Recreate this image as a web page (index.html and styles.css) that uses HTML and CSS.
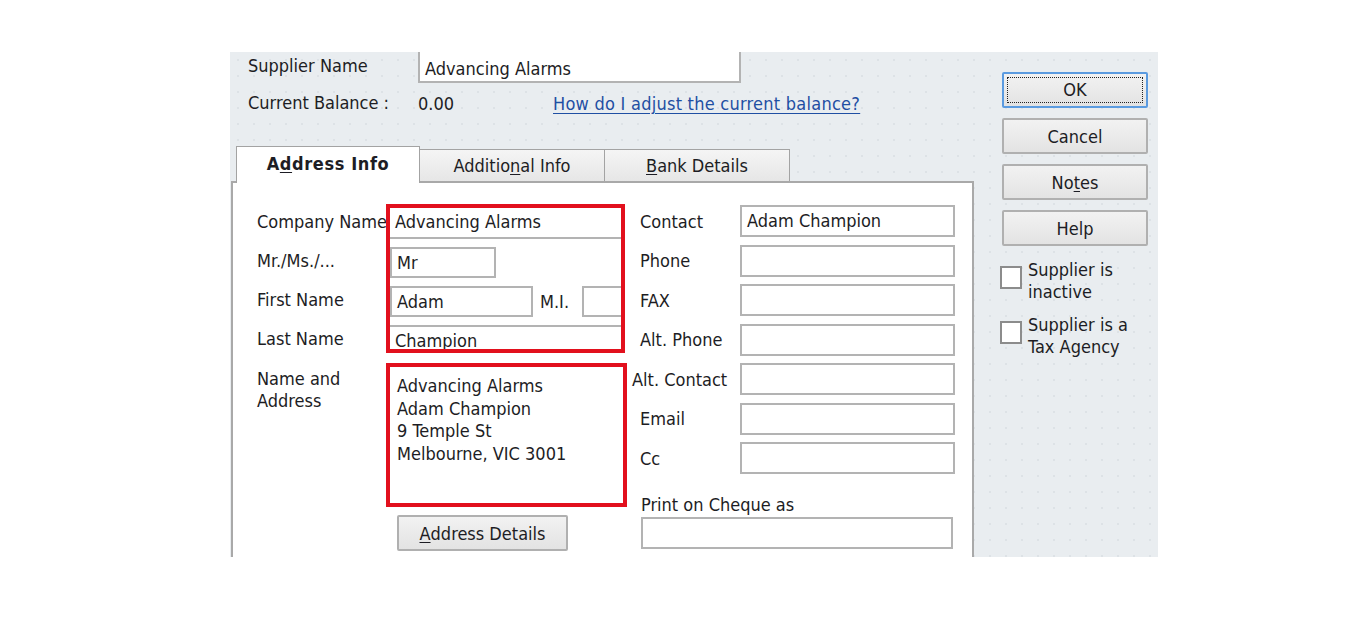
FILE: index.html
```html
<!DOCTYPE html>
<html>
<head>
<meta charset="utf-8">
<link rel="stylesheet" href="styles.css">
</head>
<body>
<div class="page">
  <div class="dialog">
    <div class="main">
      <div class="hdr-row1">
        <span class="hdr-label">Supplier Name</span>
        <div class="field supplier">Advancing Alarms</div>
      </div>
      <div class="hdr-row2">
        <span class="hdr-label">Current Balance :</span>
        <span class="balance">0.00</span>
        <a class="link" href="#">How do I adjust the current balance?</a>
      </div>
      <div class="tabs">
        <div class="tab active">A<u>d</u>dress Info</div>
        <div class="tab">Additio<u>n</u>al Info</div>
        <div class="tab"><u>B</u>ank Details</div>
      </div>
      <div class="panel">
        <div class="left">
          <div class="namegrid">
            <div class="labels">
              <div class="lrow r1">Company Name</div>
              <div class="lrow r2">Mr./Ms./...</div>
              <div class="lrow r3">First Name</div>
              <div class="lrow r4">Last Name</div>
            </div>
            <div class="redbox names">
              <div class="frow r1"><div class="field full">Advancing Alarms</div></div>
              <div class="frow r2"><div class="field mr">Mr</div></div>
              <div class="frow r3">
                <div class="field first">Adam</div>
                <span class="mi-label">M.I.</span>
                <div class="field mi"></div>
              </div>
              <div class="frow r4"><div class="field full">Champion</div></div>
            </div>
          </div>
          <div class="addrrow">
            <div class="addr-label">Name and<br>Address</div>
            <div class="redbox addr">Advancing Alarms<br>Adam Champion<br>9 Temple St<br>Melbourne, VIC 3001</div>
          </div>
          <button class="btn addr-btn"><u>A</u>ddress Details</button>
        </div>
        <div class="right">
          <div class="contact-grid">
            <span class="clabel">Contact</span><div class="field">Adam Champion</div>
            <span class="clabel">Phone</span><div class="field"></div>
            <span class="clabel">FAX</span><div class="field"></div>
            <span class="clabel">Alt. Phone</span><div class="field"></div>
            <span class="clabel shift">Alt. Contact</span><div class="field"></div>
            <span class="clabel">Email</span><div class="field"></div>
            <span class="clabel">Cc</span><div class="field"></div>
          </div>
          <div class="cheque-label">Print on Cheque as</div>
          <div class="field cheque"></div>
        </div>
      </div>
    </div>
    <div class="side">
      <button class="btn side-btn ok"><span class="focus">OK</span></button>
      <button class="btn side-btn">Cancel</button>
      <button class="btn side-btn">No<u>t</u>es</button>
      <button class="btn side-btn">Help</button>
      <div class="check first-check">
        <span class="box"></span>
        <span class="check-text">Supplier is<br>inactive</span>
      </div>
      <div class="check second-check">
        <span class="box"></span>
        <span class="check-text">Supplier is a<br>Tax Agency</span>
      </div>
    </div>
  </div>
</div>
</body>
</html>
```

FILE: styles.css
```css
* { box-sizing: border-box; }
body {
  margin: 0;
  background: #ffffff;
  font-family: "DejaVu Sans Condensed", "DejaVu Sans", sans-serif;
  font-size: 18px;
  color: #1d1d24;
}
u { text-decoration-thickness: 1px; text-underline-offset: 2px; }
.page { padding: 52px 0 0 230px; }
.dialog {
  width: 928px;
  height: 505px;
  overflow: hidden;
  display: flex;
  background-color: #e9edf0;
  background-image: radial-gradient(circle, #dde2e6 0.8px, transparent 1.3px);
  background-size: 16px 16px;
}
.main {
  width: 745px;
  flex: none;
  display: flex;
  flex-direction: column;
}
.hdr-row1 {
  display: flex;
  height: 31px;
  padding-left: 18px;
}
.hdr-label {
  width: 170px;
  flex: none;
  line-height: 28px;
  white-space: nowrap;
}
.field {
  background: #fff;
  border: 2px solid #b3b3b3;
  height: 32px;
  line-height: 28px;
  padding-left: 5px;
  white-space: nowrap;
  overflow: hidden;
}
.supplier {
  width: 323px;
  height: 35px;
  margin-top: -4px;
  padding-top: 5px;
}
.hdr-row2 {
  display: flex;
  align-items: center;
  height: 24px;
  margin-top: 8px;
  padding-left: 18px;
}
.balance { width: 135px; flex: none; }
.link {
  color: #1f4fa3;
  text-decoration: underline;
  text-decoration-thickness: 1px;
  text-underline-offset: 3px;
  white-space: nowrap;
  letter-spacing: 0.25px;
}
.tabs {
  display: flex;
  align-items: flex-end;
  height: 35px;
  margin-top: 31px;
  padding-left: 6px;
  position: relative;
  z-index: 1;
}
.tab {
  width: 186px;
  height: 32px;
  margin-left: -1px;
  border: 1px solid #a3a3a3;
  border-bottom: none;
  background: linear-gradient(#f5f5f5, #e6e6e6);
  display: flex;
  align-items: center;
  justify-content: center;
  white-space: nowrap;
}
.tab.active {
  width: 184px;
  height: 37px;
  margin-left: 0;
  margin-bottom: -2px;
  background: #fff;
  font-weight: bold;
  letter-spacing: 0.6px;
  padding-bottom: 3px;
}
.panel {
  margin-left: 1px;
  width: 743px;
  flex: 1;
  background: #fff;
  border: 2px solid #a9a9a9;
  border-bottom: none;
  display: flex;
  padding: 21px 0 0 24px;
}
.left { width: 371px; flex: none; }
.namegrid { display: flex; }
.labels {
  width: 129px;
  flex: none;
  padding-top: 4px;
  display: flex;
  flex-direction: column;
}
.lrow {
  height: 31px;
  display: flex;
  align-items: center;
  white-space: nowrap;
}
.r1 { height: 29px; margin-bottom: 8px; }
.r2 { margin-bottom: 8px; }
.r3 { margin-bottom: 8px; }
.lrow.r1 { padding-bottom: 2px; }
.redbox {
  border: 4px solid #e2101d;
  background: #fff;
  overflow: hidden;
}
.names {
  width: 239px;
  height: 149px;
  display: flex;
  flex-direction: column;
}
.frow { height: 31px; display: flex; align-items: stretch; flex: none; }
.frow .field { height: 100%; flex: none; }
.full { width: 100%; }
.frow.r1 .field { border-top: none; border-left: none; border-right: none; }
.frow.r4 .field { border-left: none; border-right: none; border-bottom: none; }
.mr { width: 106px; }
.first { width: 143px; }
.mi-label {
  width: 49px;
  flex: none;
  padding-left: 7px;
  display: flex;
  align-items: center;
}
.mi { width: 60px; }
.addrrow { display: flex; margin-top: 9px; }
.addr-label {
  width: 129px;
  flex: none;
  padding-top: 5px;
  line-height: 22px;
}
.addr {
  width: 241px;
  height: 144px;
  padding: 8px 0 0 7px;
  line-height: 22.7px;
  white-space: nowrap;
}
.btn {
  font-family: inherit;
  font-size: 18px;
  color: #1d1d24;
  background: linear-gradient(#f2f2f2, #e3e3e3);
  border: 2px solid #b0b0b0;
  border-radius: 2px;
  padding: 0;
  display: flex;
  align-items: center;
  justify-content: center;
}
.addr-btn {
  margin: 8px 0 0 140px;
  width: 171px;
  height: 36px;
}
.right {
  margin-left: 12px;
  width: 316px;
  flex: none;
  padding-top: 1px;
}
.contact-grid {
  display: grid;
  grid-template-columns: 100px 215px;
  grid-auto-rows: 32px;
  row-gap: 7.5px;
}
.clabel {
  display: flex;
  align-items: center;
  white-space: nowrap;
}
.clabel.shift { margin-left: -8px; }
.cheque-label {
  margin: 20px 0 0 1px;
  line-height: 22px;
}
.cheque {
  margin: 1px 0 0 1px;
  width: 312px;
}
.side {
  margin-left: 27px;
  width: 146px;
  flex: none;
  padding-top: 20px;
  display: flex;
  flex-direction: column;
}
.side-btn {
  width: 146px;
  height: 36px;
  margin-bottom: 10px;
}
.ok {
  border-color: #5b9be0;
  padding: 3px;
}
.focus {
  flex: 1;
  align-self: stretch;
  border: 1px dotted #222;
  display: flex;
  align-items: center;
  justify-content: center;
  padding-bottom: 2px;
}
.check {
  display: flex;
  margin-left: -2px;
  line-height: 22px;
}
.first-check { margin-top: 3px; }
.second-check { margin-top: 11px; }
.box {
  width: 22px;
  height: 23px;
  margin-top: 7px;
  flex: none;
  background: #fff;
  border: 2px solid #8c8c8c;
}
.check-text {
  margin-left: 6px;
  white-space: nowrap;
}
```
